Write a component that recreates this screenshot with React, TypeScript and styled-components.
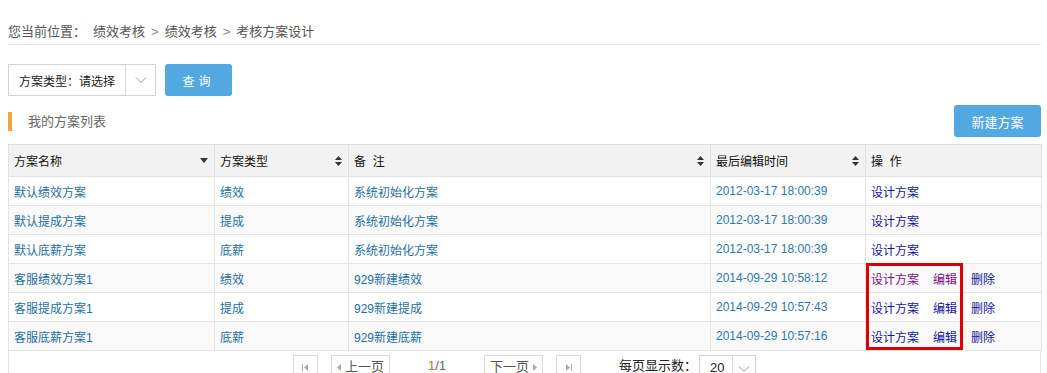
import React from 'react';
import styled, { createGlobalStyle } from 'styled-components';

const GlobalStyle = createGlobalStyle`
  body {
    margin: 0;
    background: #fff;
    font-family: "Liberation Sans", "Noto Sans CJK SC", sans-serif;
    font-size: 12px;
    color: #333;
  }
`;

const Page = styled.div`
  padding: 0 6px 0 8px;
  width: 1033px;
`;

const Breadcrumb = styled.div`
  height: 24px;
  padding-top: 20px;
  line-height: 16px;
  border-bottom: 1px solid #e6e6e6;
  color: #555;
  font-size: 13px;
  display: flex;
  align-items: center;
`;

const Crumb = styled.span<{ $lead?: boolean }>`
  margin-right: ${p => (p.$lead ? '7px' : '0')};
`;

const Sep = styled.span`
  margin: 0 6px;
  color: #888;
`;

const SearchBar = styled.div`
  margin-top: 19px;
  display: flex;
  align-items: center;
  gap: 9px;
`;

const Select = styled.div<{ $w: number; $split: number }>`
  width: ${p => p.$w}px;
  height: 30px;
  border: 1px solid #d2d2d2;
  display: grid;
  grid-template-columns: ${p => p.$split}px 1fr;
  background: #fff;
`;

const SelectText = styled.div`
  display: flex;
  align-items: center;
  padding-left: 10px;
  color: #222;
  border-right: 1px solid #d9d9d9;
`;

const SelectArrow = styled.div`
  display: flex;
  align-items: center;
  justify-content: center;
`;

const BlueButton = styled.button<{ $w: number }>`
  width: ${p => p.$w}px;
  height: 32px;
  border: none;
  border-radius: 3px;
  background: #52a8e0;
  color: #fff;
  font-family: inherit;
  font-size: ${p => (p.$w < 80 ? '12px' : '13px')};
  letter-spacing: ${p => (p.$w < 80 ? '4px' : '0')};
  padding: 0;
`;

const TitleBar = styled.div`
  margin-top: 9px;
  height: 32px;
  display: flex;
  align-items: center;
  justify-content: space-between;
`;

const Title = styled.div`
  border-left: 4px solid #f5a53a;
  height: 19px;
  line-height: 19px;
  padding-left: 16px;
  font-size: 13px;
  color: #666;
`;

const TableWrap = styled.div`
  position: relative;
  margin-top: 7px;
`;

const Table = styled.table`
  width: 100%;
  border-collapse: collapse;
  table-layout: fixed;
`;

const Th = styled.th<{ $w: number }>`
  box-sizing: border-box;
  width: ${p => p.$w}px;
  height: 32px;
  background: #f2f2f2;
  border: 1px solid #e0e0e0;
  font-weight: normal;
  color: #111;
  text-align: left;
  padding: 0 6px 0 5px;
`;

const ThInner = styled.div`
  display: flex;
  align-items: center;
  justify-content: space-between;
`;

const Tr = styled.tr<{ $alt: boolean }>`
  background: ${p => (p.$alt ? '#f9f9f9' : '#fff')};
`;

const Td = styled.td`
  height: 28px;
  border: 1px solid #e3e3e3;
  padding: 0 5px;
  color: #1d6ea3;
  white-space: nowrap;
`;

const DateText = styled.span`
  color: #2e78ae;
`;

const Ops = styled.div`
  display: flex;
  gap: 14px;
`;

const OpLink = styled.span<{ $visited?: boolean }>`
  color: ${p => (p.$visited ? '#7e0f8a' : '#1414a0')};
`;

const Highlight = styled.div`
  position: absolute;
  left: 858px;
  top: 119px;
  width: 91px;
  height: 81px;
  border: 3px solid #e00000;
  pointer-events: none;
`;

const Pager = styled.div`
  border: 1px solid #e3e3e3;
  border-top: none;
  height: 30px;
  display: flex;
  justify-content: center;
  align-items: flex-start;
  padding-top: 4px;
`;

const PageBtn = styled.div<{ $w: number; $ml: number }>`
  width: ${p => p.$w}px;
  height: 26px;
  margin-left: ${p => p.$ml}px;
  border: 1px solid #dcdcdc;
  box-sizing: border-box;
  display: flex;
  align-items: flex-start;
  justify-content: center;
  gap: 4px;
  padding-top: 3px;
  line-height: 16px;
  color: #555;
  font-size: 13px;
  svg {
    margin-top: 5px;
  }
`;

const PageInfo = styled.div<{ $ml: number }>`
  margin-left: ${p => p.$ml}px;
  padding-top: 3px;
  line-height: 16px;
  font-size: 13px;
  color: #666;
`;

const Current = styled.span`
  color: #e2651c;
`;

const PerPage = styled.div`
  margin-left: 38px;
  padding-top: 3px;
  line-height: 16px;
  font-size: 13px;
  color: #222;
  margin-right: 2px;
`;

const PagerSelect = styled(Select)`
  font-size: 13px;
  align-items: start;
  ${SelectText} {
    align-items: flex-start;
    padding-top: 4px;
  }
  ${SelectArrow} {
    align-items: flex-start;
    padding-top: 9px;
  }
`;

const Chevron = () => (
  <svg width="12" height="8" viewBox="0 0 12 8">
    <polyline points="1,1.5 6,6.5 11,1.5" fill="none" stroke="#999" strokeWidth="1" />
  </svg>
);

const SortBoth = () => (
  <svg width="7" height="10" viewBox="0 0 7 10">
    <polygon points="0,4 7,4 3.5,0" fill="#333" />
    <polygon points="0,6 7,6 3.5,10" fill="#333" />
  </svg>
);

const SortDown = () => (
  <svg width="8" height="5" viewBox="0 0 8 5">
    <polygon points="0,0 8,0 4,5" fill="#333" />
  </svg>
);

const Tri = ({ dir }: { dir: 'l' | 'r' }) => (
  <svg width="4" height="7" viewBox="0 0 4 7">
    <polygon points={dir === 'l' ? '4,0 4,7 0,3.5' : '0,0 0,7 4,3.5'} fill="#aaa" />
  </svg>
);

const Edge = ({ dir }: { dir: 'l' | 'r' }) => (
  <svg width="7" height="7" viewBox="0 0 7 7">
    {dir === 'l' ? (
      <>
        <rect x="0" y="0" width="1" height="7" fill="#aaa" />
        <polygon points="6,0 6,7 2,3.5" fill="#aaa" />
      </>
    ) : (
      <>
        <polygon points="1,0 1,7 5,3.5" fill="#aaa" />
        <rect x="6" y="0" width="1" height="7" fill="#aaa" />
      </>
    )}
  </svg>
);

const columns = [
  { label: '方案名称', w: 206, sort: 'down' },
  { label: '方案类型', w: 134, sort: 'both' },
  { label: '备  注', w: 362, sort: 'both' },
  { label: '最后编辑时间', w: 155, sort: 'both' },
  { label: '操  作', w: 176, sort: '' },
];

const rows = [
  { name: '默认绩效方案', type: '绩效', note: '系统初始化方案', time: '2012-03-17 18:00:39', full: false },
  { name: '默认提成方案', type: '提成', note: '系统初始化方案', time: '2012-03-17 18:00:39', full: false },
  { name: '默认底薪方案', type: '底薪', note: '系统初始化方案', time: '2012-03-17 18:00:39', full: false },
  { name: '客服绩效方案1', type: '绩效', note: '929新建绩效', time: '2014-09-29 10:58:12', full: true, visited: true },
  { name: '客服提成方案1', type: '提成', note: '929新建提成', time: '2014-09-29 10:57:43', full: true },
  { name: '客服底薪方案1', type: '底薪', note: '929新建底薪', time: '2014-09-29 10:57:16', full: true },
];

export default function App() {
  return (
    <Page>
      <GlobalStyle />
      <Breadcrumb>
        <Crumb $lead>您当前位置：</Crumb>
        <Crumb>绩效考核</Crumb>
        <Sep>&gt;</Sep>
        <Crumb>绩效考核</Crumb>
        <Sep>&gt;</Sep>
        <Crumb>考核方案设计</Crumb>
      </Breadcrumb>

      <SearchBar>
        <Select $w={146} $split={117}>
          <SelectText>方案类型：请选择</SelectText>
          <SelectArrow>
            <Chevron />
          </SelectArrow>
        </Select>
        <BlueButton $w={67}>查询</BlueButton>
      </SearchBar>

      <TitleBar>
        <Title>我的方案列表</Title>
        <BlueButton $w={87}>新建方案</BlueButton>
      </TitleBar>

      <TableWrap>
        <Table>
          <thead>
            <tr>
              {columns.map(c => (
                <Th key={c.label} $w={c.w}>
                  <ThInner>
                    <span style={{ whiteSpace: 'pre' }}>{c.label}</span>
                    {c.sort === 'down' && <SortDown />}
                    {c.sort === 'both' && <SortBoth />}
                  </ThInner>
                </Th>
              ))}
            </tr>
          </thead>
          <tbody>
            {rows.map((r, i) => (
              <Tr key={r.name} $alt={i % 2 === 1}>
                <Td>{r.name}</Td>
                <Td>{r.type}</Td>
                <Td>{r.note}</Td>
                <Td>
                  <DateText>{r.time}</DateText>
                </Td>
                <Td>
                  <Ops>
                    <OpLink $visited={r.visited}>设计方案</OpLink>
                    {r.full && <OpLink $visited={r.visited}>编辑</OpLink>}
                    {r.full && <OpLink>删除</OpLink>}
                  </Ops>
                </Td>
              </Tr>
            ))}
          </tbody>
        </Table>
        <Pager>
          <PageBtn $w={25} $ml={0}>
            <Edge dir="l" />
          </PageBtn>
          <PageBtn $w={59} $ml={13}>
            <Tri dir="l" />
            上一页
          </PageBtn>
          <PageInfo $ml={38}>
            <Current>1</Current>/1
          </PageInfo>
          <PageBtn $w={59} $ml={38}>
            下一页
            <Tri dir="r" />
          </PageBtn>
          <PageBtn $w={25} $ml={13}>
            <Edge dir="r" />
          </PageBtn>
          <PerPage>每页显示数：</PerPage>
          <PagerSelect $w={55} $split={33}>
            <SelectText>20</SelectText>
            <SelectArrow>
              <Chevron />
            </SelectArrow>
          </PagerSelect>
        </Pager>
        <Highlight />
      </TableWrap>
    </Page>
  );
}
